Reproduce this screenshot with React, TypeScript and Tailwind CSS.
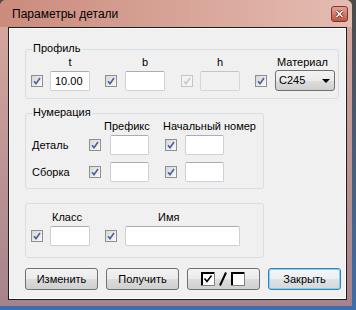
import React from 'react';

const Check: React.FC<{ disabled?: boolean }> = ({ disabled }) => (
  <span
    className={
      disabled
        ? 'w-[12px] h-[12px] shrink-0 border border-[#c6c6c6] bg-[#f3f3f3] flex items-center justify-center'
        : 'w-[12px] h-[12px] shrink-0 border border-[#8e8f8f] bg-linear-to-br from-[#d6d6d6] to-[#fafafa] flex items-center justify-center'
    }
  >
    <svg width="8" height="8" viewBox="0 0 8 8">
      <path
        d="M1 4.2 L3 6.6 L7 1"
        fill="none"
        stroke={disabled ? '#c8c8c8' : '#4b5f9e'}
        strokeWidth="1.6"
      />
    </svg>
  </span>
);

const Field: React.FC<{ className: string; value?: string; disabled?: boolean }> = ({
  className,
  value,
  disabled
}) => (
  <div
    className={`${className} h-[20px] shrink-0 rounded-[2px] border border-[#cdd0d5] border-t-[#abadb3] flex items-center px-[4px] ${
      disabled ? 'bg-[#f0f0f0] border-[#d6d6d6] border-t-[#c4c4c4]' : 'bg-white'
    }`}
  >
    {value}
  </div>
);

const Group: React.FC<{ legend?: string; className: string; children: React.ReactNode }> = ({
  legend,
  className,
  children
}) => (
  <div className={`relative ml-[15px] rounded-[3px] border border-[#d5dfe5] ${className}`}>
    {legend && (
      <span className="absolute -top-[8px] left-[6px] bg-[#f0f0f0] px-[1px] leading-[13px]">
        {legend}
      </span>
    )}
    {children}
  </div>
);

const btn =
  'w-[73px] h-[22px] rounded-[3px] border border-[#707070] bg-[linear-gradient(#f2f2f2,#ebebeb_50%,#dddddd_50%,#cfcfcf)] flex items-center justify-center';

export default function App() {
  return (
    <div className="w-[356px] h-[310px] overflow-hidden bg-linear-to-b from-[#4b4b4b] to-[#3d6fa9] font-['Liberation_Sans',Arial,sans-serif] text-[11px] text-black">
      <div className="w-[352px] h-[306px] rounded-t-[6px] bg-linear-to-b from-[#d9a99e] to-[#a6838c] flex flex-col">
        {/* title bar */}
        <div className="h-[27px] rounded-t-[6px] bg-linear-to-r from-[#cb8b7d] to-[#e4bcb2] flex items-center pl-[12px] pr-[4px]">
          <span className="text-[12px] mt-[1px]">Параметры детали</span>
          <div className="ml-auto w-[17px] h-[16px] mt-[1px] rounded-[3px] border border-[#6e3c34] bg-linear-to-b from-[#e9a08f] to-[#c4523f] flex items-center justify-center">
            <svg width="9" height="8" viewBox="0 0 9 8">
              <path d="M1.5 1 L7.5 7 M7.5 1 L1.5 7" stroke="#5a2a22" strokeWidth="3" />
              <path d="M1.5 1 L7.5 7 M7.5 1 L1.5 7" stroke="#ffffff" strokeWidth="1.6" />
            </svg>
          </div>
        </div>

        {/* client */}
        <div className="ml-[8px] w-[339px] h-[273px] border border-[#1e1e1e]">
          <div className="h-full border border-white bg-[#f0f0f0] flex flex-col">
            {/* Профиль */}
            <Group legend="Профиль" className="mt-[20px] w-[314px] h-[50px]">
              <div className="flex items-end pl-[5px] pt-[6px]">
                <span className="mb-[4px]"><Check /></span>
                <div className="ml-[7px] flex flex-col">
                  <span className="h-[13px] leading-[13px] mb-[2px] text-center">t</span>
                  <Field className="w-[40px]" value="10.00" />
                </div>
                <span className="ml-[15px] mb-[4px]"><Check /></span>
                <div className="ml-[8px] flex flex-col">
                  <span className="h-[13px] leading-[13px] mb-[2px] text-center">b</span>
                  <Field className="w-[40px]" />
                </div>
                <span className="ml-[16px] mb-[4px]"><Check disabled /></span>
                <div className="ml-[7px] flex flex-col">
                  <span className="h-[13px] leading-[13px] mb-[2px] text-center">h</span>
                  <Field className="w-[40px]" disabled />
                </div>
                <span className="ml-[15px] mb-[4px]"><Check /></span>
                <div className="ml-[8px] flex flex-col">
                  <span className="h-[13px] leading-[13px] mb-[1px] pl-[2px]">Материал</span>
                  <div className="w-[60px] h-[21px] rounded-[3px] border border-[#707070] bg-[linear-gradient(#f2f2f2,#ebebeb_50%,#dddddd_50%,#cfcfcf)] flex items-center pl-[3px] pr-[4px]">
                    <span>С245</span>
                    <span className="ml-auto w-0 h-0 border-x-[4px] border-x-transparent border-t-[4px] border-t-black" />
                  </div>
                </div>
              </div>
            </Group>

            {/* Нумерация */}
            <Group legend="Нумерация" className="mt-[14px] w-[239px] h-[76px]">
              <div className="flex flex-col pl-[6px] pt-[6px]">
                <div className="flex h-[13px] leading-[13px]">
                  <span className="w-[72px]" />
                  <span className="w-[59px]">Префикс</span>
                  <span>Начальный номер</span>
                </div>
                <div className="flex items-center mt-[2px]">
                  <span className="w-[57px]">Деталь</span>
                  <Check />
                  <Field className="ml-[9px] w-[39px]" />
                  <span className="ml-[16px]"><Check /></span>
                  <Field className="ml-[8px] w-[39px]" />
                </div>
                <div className="flex items-center mt-[7px]">
                  <span className="w-[57px]">Сборка</span>
                  <Check />
                  <Field className="ml-[9px] w-[39px]" />
                  <span className="ml-[16px]"><Check /></span>
                  <Field className="ml-[8px] w-[39px]" />
                </div>
              </div>
            </Group>

            {/* Класс / Имя */}
            <Group className="mt-[14px] w-[239px] h-[55px]">
              <div className="flex items-end pl-[5px] pt-[7px]">
                <span className="mb-[4px]"><Check /></span>
                <div className="ml-[7px] flex flex-col">
                  <span className="h-[13px] leading-[13px] mb-[2px] pl-[2px]">Класс</span>
                  <Field className="w-[40px]" />
                </div>
                <span className="ml-[15px] mb-[4px]"><Check /></span>
                <div className="ml-[8px] flex flex-col">
                  <span className="h-[13px] leading-[13px] mb-[2px] pl-[33px]">Имя</span>
                  <Field className="w-[115px]" />
                </div>
              </div>
            </Group>

            {/* buttons */}
            <div className="mt-[10px] ml-[15px] flex gap-[8px]">
              <button className={btn}>Изменить</button>
              <button className={btn}>Получить</button>
              <button className={btn}>
                <svg width="45" height="14" viewBox="0 0 45 14">
                  <rect x="0.5" y="0.5" width="13" height="13" fill="#fff" stroke="#808080" />
                  <path d="M1 13 V1 H13" fill="none" stroke="#000" strokeWidth="2" />
                  <path d="M3.5 6.5 L6 9.5 L10.5 3.5" fill="none" stroke="#000" strokeWidth="1.6" />
                  <path d="M19 13.5 L25 0.5" stroke="#000" strokeWidth="2" />
                  <rect x="30.5" y="0.5" width="13" height="13" fill="#fff" stroke="#808080" />
                  <path d="M31 13 V1 H43" fill="none" stroke="#000" strokeWidth="2" />
                </svg>
              </button>
              <button className="w-[73px] h-[22px] rounded-[3px] border border-[#3c7fb1] bg-[linear-gradient(#f4f7f9,#eceff1_50%,#dfe3e6_50%,#d3d8dc)] shadow-[inset_0_0_0_1px_#7fd0f5] flex items-center justify-center">
                Закрыть
              </button>
            </div>
          </div>
        </div>
      </div>
    </div>
  );
}
